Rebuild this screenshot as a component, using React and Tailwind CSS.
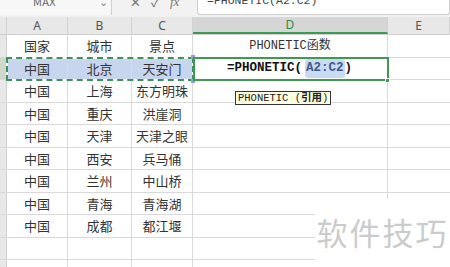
import React from 'react';

const cols = [
  { key: 'h', w: 'w-[7px]' },
  { key: 'A', w: 'w-[61px]' },
  { key: 'B', w: 'w-[64px]' },
  { key: 'C', w: 'w-[61px]' },
  { key: 'D', w: 'w-[195px]' },
  { key: 'E', w: 'w-[62px]' },
];

const rows = [
  ['国家', '城市', '景点'],
  ['中国', '北京', '天安门'],
  ['中国', '上海', '东方明珠'],
  ['中国', '重庆', '洪崖洞'],
  ['中国', '天津', '天津之眼'],
  ['中国', '西安', '兵马俑'],
  ['中国', '兰州', '中山桥'],
  ['中国', '青海', '青海湖'],
  ['中国', '成都', '都江堰'],
  ['', '', ''],
  ['', '', ''],
];

const cjk = "font-['Noto_Sans_CJK_SC',sans-serif]";
const mono = "font-['Liberation_Mono','Noto_Sans_CJK_SC',monospace]";

const App = () => {
  return (
    <div className={`relative w-[450px] h-[267px] overflow-hidden bg-white ${cjk} text-[#333]`}>
      {/* 编辑栏（上半部分被裁掉） */}
      <div className="flex h-[17px] bg-[#f2f2f2] overflow-hidden">
        <div className="w-[112px] flex items-start relative border-r border-[#cfcfcf] mb-[2px] bg-[#f7f7f7]">
          <span className="ml-[33px] text-[11px] leading-none -mt-[4px] text-[#666] tracking-wide">MAX</span>
          <span className="absolute right-[3px] -top-[7px] text-[11px] text-[#888]">⌄</span>
        </div>
        <div className="w-[85px] flex items-start gap-[10px] pl-[18px] text-[13px] text-[#777] leading-none -mt-[5px]">
          <span>✕</span>
          <span>✓</span>
          <span className="italic font-['Liberation_Serif',serif]">fx</span>
        </div>
        <div className="flex-1 bg-white border border-t-0 border-[#cfcfcf] rounded-b-[3px] mb-[2px] flex items-start px-[9px]">
          <span className={`${mono} text-[11.5px] leading-none -mt-[5px] text-[#444]`}>=PHONETIC(A2:C2)</span>
        </div>
      </div>

      {/* 列标题 */}
      <div className="flex h-[18px] bg-[#e8e8e8] border-b border-[#cfcfcf]">
        {cols.map((c) => (
          <div
            key={c.key}
            className={`${c.w} shrink-0 flex items-center justify-center text-[12px] font-['Noto_Sans',sans-serif] border-r border-[#d2d2d2] ${
              c.key === 'D' ? 'bg-[#d6d6d6] text-[#2f8a45] border-b-2 border-b-[#3d9a52]' : 'text-[#555]'
            }`}
          >
            {c.key === 'h' ? '' : c.key}
          </div>
        ))}
      </div>

      {/* 表格 */}
      {rows.map((r, i) => (
        <div key={i} className="flex h-[22.5px] border-b border-[#d9d9d9]">
          <div className={`w-[7px] shrink-0 border-r border-[#cfcfcf] ${i === 1 ? 'bg-[#cfd8c9]' : 'bg-[#e8e8e8]'}`} />
          {r.map((t, j) => (
            <div
              key={j}
              className={`${cols[j + 1].w} shrink-0 flex items-center justify-center text-[13px] border-r border-[#d9d9d9] ${
                i === 1 ? 'bg-[#c7d5ef]' : ''
              }`}
            >
              {t}
            </div>
          ))}
          <div className={`w-[195px] shrink-0 flex items-center border-r border-[#d9d9d9] ${mono}`}>
            {i === 0 && <span className="w-full text-center text-[12px] text-[#333]">PHONETIC函数</span>}
            {i === 1 && (
              <span className="pl-[34px] text-[12.5px] font-bold text-[#111] flex items-center">
                =PHONETIC(<span className="ml-[3px] px-[1px] bg-[#c9daf2] text-[#3a5a8c] rounded-[3px]">A2:C2</span>)
              </span>
            )}
          </div>
          <div className="w-[62px] shrink-0" />
        </div>
      ))}

      {/* 复制选区虚线框 */}
      <div className="absolute left-[6px] top-[57px] w-[188px] h-[24px] border-2 border-white pointer-events-none" />
      <div className="absolute left-[6px] top-[57px] w-[188px] h-[24px] border-2 border-dashed border-[#3f9159] pointer-events-none" />
      <div className="absolute left-[191px] top-[55px] w-[4px] h-[4px] bg-[#8aa0c8]" />
      <div className="absolute left-[191px] top-[79px] w-[4px] h-[4px] bg-[#8aa0c8]" />

      {/* 活动单元格 */}
      <div className="absolute left-[193px] top-[57px] w-[196px] h-[24px] border-2 border-[#3d9a52] pointer-events-none" />
      <div className="absolute left-[385px] top-[78px] w-[5px] h-[5px] bg-[#3d9a52] border border-white" />

      {/* 函数提示 */}
      <div className={`absolute left-[235px] top-[91px] h-[14px] px-[2px] flex items-center bg-[#ffffe1] border border-[#333] ${mono} text-[10.5px] leading-none text-[#222]`}>
        PHONETIC (<span className="font-bold">引用</span>)
      </div>

      {/* 水印 */}
      <div className="absolute left-[315px] top-[199px] w-[135px] h-[68px] bg-white flex items-center justify-center">
        <span className={`${cjk} text-[31px] tracking-[2px] text-[#cbcbcb] -mt-[2px]`}>软件技巧</span>
      </div>
    </div>
  );
};

export default App;
